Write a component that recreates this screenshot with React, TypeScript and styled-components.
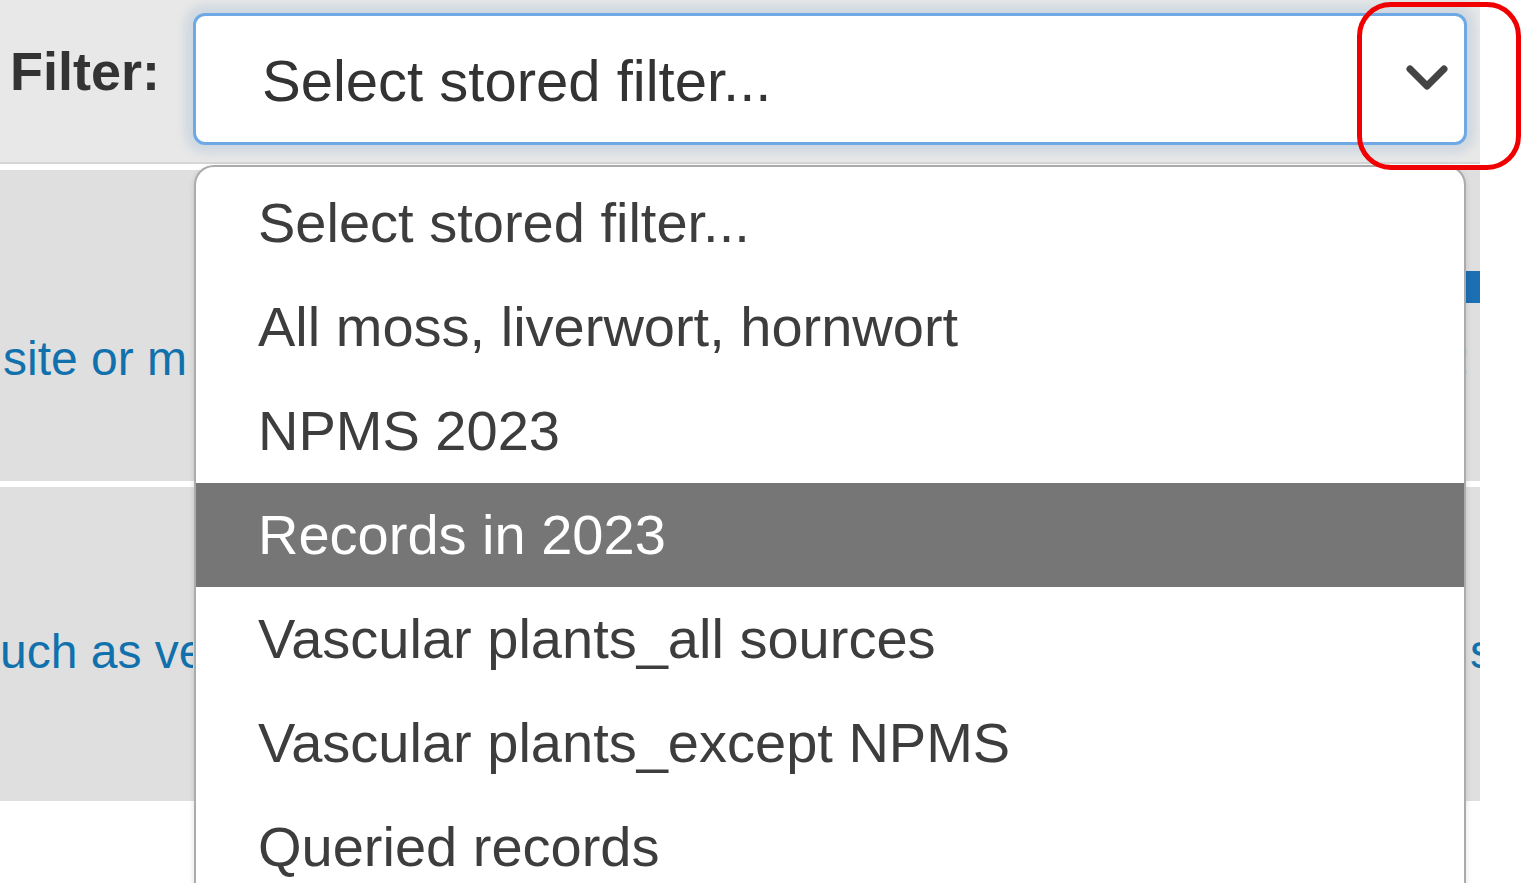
import React from 'react';
import styled, { createGlobalStyle } from 'styled-components';

const GlobalStyle = createGlobalStyle`
  html, body {
    margin: 0;
    padding: 0;
    background: #ffffff;
    font-family: "Liberation Sans", Arial, sans-serif;
    overflow: hidden;
  }
`;

const Screen = styled.div`
  position: relative;
  width: 1523px;
  height: 883px;
  overflow: hidden;
  background: #ffffff;
`;

const Page = styled.div`
  width: 1480px;
  overflow: hidden;
`;

const FilterBar = styled.div`
  display: flex;
  align-items: flex-start;
  gap: 33px;
  height: 164px;
  padding: 13px 13px 0 10px;
  box-sizing: border-box;
  background: #e8e8e8;
  border-bottom: 2px solid #d6d6d6;
  margin-bottom: 6px;
`;

const Label = styled.label`
  font-size: 54px;
  font-weight: 700;
  color: #333333;
  line-height: 132px;
  height: 132px;
  margin-top: -8px;
`;

const SelectBox = styled.div`
  flex: 1;
  display: flex;
  align-items: center;
  justify-content: space-between;
  height: 132px;
  box-sizing: border-box;
  padding: 0 14px 0 66px;
  background: #ffffff;
  border: 3px solid #6ea9e6;
  border-radius: 12px;
  box-shadow: 0 0 10px 8px rgba(120, 160, 200, 0.22);
`;

const SelectText = styled.span`
  font-size: 58px;
  color: #333333;
  margin-top: 2px;
`;

const Panel = styled.div<{ $top: number; $height: number }>`
  display: flex;
  justify-content: space-between;
  align-items: flex-start;
  height: ${p => p.$height}px;
  box-sizing: border-box;
  padding-top: ${p => p.$top}px;
  background: #dfdfdf;
  margin-bottom: 6px;
  white-space: nowrap;
`;

const LeftCol = styled.div`
  width: 193px;
  overflow: hidden;
`;

const RightCol = styled.div`
  display: flex;
  flex-direction: column;
  align-items: flex-end;
  gap: 28px;
  width: 16px;
  overflow: hidden;
`;

const PanelText = styled.div<{ $indent?: number; $top?: number; $right?: number }>`
  font-size: 48px;
  line-height: 55px;
  color: #1171ad;
  margin-left: ${p => p.$indent ?? 0}px;
  margin-top: ${p => p.$top ?? 0}px;
  margin-right: ${p => p.$right ?? 0}px;
`;

const BlueButton = styled.span`
  display: block;
  width: 16px;
  height: 32px;
  background: #1c6fb3;
`;

const Dropdown = styled.ul`
  position: absolute;
  left: 194px;
  top: 165px;
  width: 1272px;
  height: 760px;
  margin: 0;
  padding: 4px 0 0;
  list-style: none;
  box-sizing: border-box;
  background: #ffffff;
  border: 2px solid #ababab;
  border-bottom: none;
  border-radius: 20px 20px 0 0;
  box-shadow: 0 2px 6px rgba(0, 0, 0, 0.12);
`;

const Option = styled.li<{ $active?: boolean }>`
  height: 104px;
  line-height: 104px;
  padding-left: 62px;
  font-size: 56px;
  white-space: nowrap;
  color: ${p => (p.$active ? '#ffffff' : '#3d3d3d')};
  background: ${p => (p.$active ? '#767676' : 'transparent')};
`;

const Callout = styled.div`
  position: absolute;
  left: 1357px;
  top: 2px;
  width: 164px;
  height: 168px;
  box-sizing: border-box;
  border: 5px solid #f00000;
  border-radius: 34px;
  pointer-events: none;
`;

const options = [
  'Select stored filter...',
  'All moss, liverwort, hornwort',
  'NPMS 2023',
  'Records in 2023',
  'Vascular plants_all sources',
  'Vascular plants_except NPMS',
  'Queried records',
];

export default function App() {
  return (
    <Screen>
      <GlobalStyle />
      <Page>
        <FilterBar>
          <Label>Filter:</Label>
          <SelectBox>
            <SelectText>Select stored filter...</SelectText>
            <svg width="46" height="32" viewBox="0 0 46 32">
              <polyline
                points="6,6 23,23 40,6"
                fill="none"
                stroke="#444"
                strokeWidth="7"
                strokeLinecap="round"
                strokeLinejoin="round"
              />
            </svg>
          </SelectBox>
        </FilterBar>

        <Panel $top={101} $height={311}>
          <LeftCol>
            <PanelText $indent={3} $top={60}>site or m</PanelText>
          </LeftCol>
          <RightCol>
            <BlueButton />
            <PanelText $right={10}>:</PanelText>
          </RightCol>
        </Panel>

        <Panel $top={137} $height={314}>
          <LeftCol>
            <PanelText $indent={-24}>such as ve</PanelText>
          </LeftCol>
          <RightCol>
            <PanelText $right={-14}>s</PanelText>
          </RightCol>
        </Panel>
      </Page>

      <Dropdown>
        {options.map(o => (
          <Option key={o} $active={o === 'Records in 2023'}>
            {o}
          </Option>
        ))}
      </Dropdown>

      <Callout />
    </Screen>
  );
}
